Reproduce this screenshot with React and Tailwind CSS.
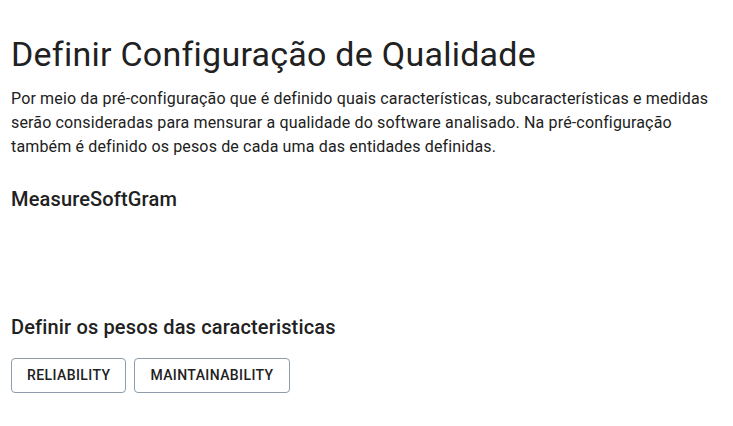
export default function App() {
  const characteristics = ["Reliability", "Maintainability"];

  return (
    <div className="min-h-screen bg-white px-[11px] pt-[33px] text-[#212121] [font-family:Roboto,'Liberation_Sans',sans-serif]">
      <h1 className="text-[34px] leading-[42px] font-normal tracking-[0.25px]">
        Definir Configuração de Qualidade
      </h1>
      <p className="mt-[12px] text-[16px] leading-[24px] tracking-[0.15px] pr-[4px]">
        Por meio da pré-configuração que é definido quais características, subcaracterísticas e medidas serão
        consideradas para mensurar a qualidade do software analisado. Na pré-configuração também é definido os
        pesos de cada uma das entidades definidas.
      </p>

      <h2 className="mt-[24px] text-[20px] leading-[32px] font-medium tracking-[0.15px]">MeasureSoftGram</h2>

      {/* área do gráfico (vazia) */}
      <div className="h-[96px]" />

      <h2 className="text-[20px] leading-[32px] font-medium tracking-[0.15px]">Definir os pesos das caracteristicas</h2>

      <div className="mt-[15px] flex gap-[8px]">
        {characteristics.map((c) => (
          <button
            key={c}
            className="h-[35px] px-[15px] rounded-[4px] border border-[#8d9ca8] text-[14px] font-medium uppercase tracking-[0.4px] text-[#212121]"
          >
            {c}
          </button>
        ))}
      </div>
    </div>
  );
}
